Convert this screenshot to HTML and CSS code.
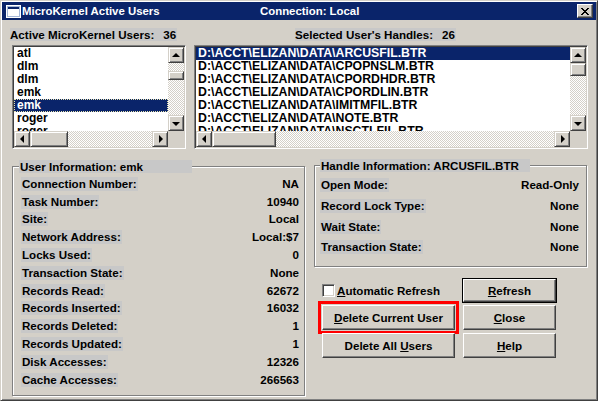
FILE: index.html
```html
<!DOCTYPE html>
<html>
<head>
<meta charset="utf-8">
<title>MicroKernel Active Users</title>
<link rel="stylesheet" href="styles.css">
</head>
<body>
<div class="window">
  <div class="titlebar">
    <svg class="appicon" width="15" height="13" viewBox="0 0 15 13">
      <rect x="0" y="0" width="15" height="13" fill="#ffffff"/>
      <rect x="1" y="1" width="13" height="11" fill="#a6b8d8"/>
      <rect x="2" y="2" width="11" height="2" fill="#0a246a"/>
      <rect x="2" y="4" width="11" height="7" fill="#ffffff"/>
    </svg>
    <span class="title-main">MicroKernel Active Users</span>
    <span class="title-conn">Connection: Local</span>
    <button class="tb-close" type="button" aria-label="Close">
      <svg width="8" height="7" viewBox="0 0 8 7">
        <rect x="0" y="0" width="2" height="1"/><rect x="6" y="0" width="2" height="1"/>
        <rect x="1" y="1" width="2" height="1"/><rect x="5" y="1" width="2" height="1"/>
        <rect x="2" y="2" width="4" height="1"/>
        <rect x="3" y="3" width="2" height="1"/>
        <rect x="2" y="4" width="4" height="1"/>
        <rect x="1" y="5" width="2" height="1"/><rect x="5" y="5" width="2" height="1"/>
        <rect x="0" y="6" width="2" height="1"/><rect x="6" y="6" width="2" height="1"/>
      </svg>
    </button>
  </div>

  <div class="dialog">
    <div class="top">
      <div class="col-users">
        <div class="caption"><span class="lbl">Active MicroKernel Users:<span class="count">36</span></span></div>
        <div class="listbox">
          <ul class="items users">
            <li>atl</li>
            <li>dlm</li>
            <li>dlm</li>
            <li>emk</li>
            <li class="sel focus">emk</li>
            <li>roger</li>
            <li>roger</li>
          </ul>
          <div class="vscroll">
            <div class="sbtn"><span class="arr up"></span></div>
            <div class="track v"><div class="thumb users-v"></div></div>
            <div class="sbtn"><span class="arr down"></span></div>
          </div>
          <div class="hscroll">
            <div class="sbtn"><span class="arr left"></span></div>
            <div class="track h"><div class="thumb users-h"></div></div>
            <div class="sbtn"><span class="arr right"></span></div>
          </div>
          <div class="corner"></div>
        </div>
      </div>

      <div class="col-handles">
        <div class="caption"><span class="lbl">Selected User's Handles:<span class="count">26</span></span></div>
        <div class="listbox">
          <ul class="items files">
            <li class="sel">D:\ACCT\ELIZAN\DATA\ARCUSFIL.BTR</li>
            <li>D:\ACCT\ELIZAN\DATA\CPOPNSLM.BTR</li>
            <li>D:\ACCT\ELIZAN\DATA\CPORDHDR.BTR</li>
            <li>D:\ACCT\ELIZAN\DATA\CPORDLIN.BTR</li>
            <li>D:\ACCT\ELIZAN\DATA\IMITMFIL.BTR</li>
            <li>D:\ACCT\ELIZAN\DATA\NOTE.BTR</li>
            <li>D:\ACCT\ELIZAN\DATA\NSCTLFIL.BTR</li>
          </ul>
          <div class="vscroll">
            <div class="sbtn"><span class="arr up"></span></div>
            <div class="track v"><div class="thumb files-v"></div></div>
            <div class="sbtn"><span class="arr down"></span></div>
          </div>
          <div class="hscroll">
            <div class="sbtn"><span class="arr left"></span></div>
            <div class="track h"><div class="thumb files-h"></div></div>
            <div class="sbtn"><span class="arr right"></span></div>
          </div>
          <div class="corner"></div>
        </div>
      </div>
    </div>

    <div class="bottom">
      <fieldset class="group user-info">
        <legend>User Information: emk</legend>
        <div class="rows">
          <div class="row"><span class="k">Connection Number:</span><span class="v">NA</span></div>
          <div class="row"><span class="k">Task Number:</span><span class="v">10940</span></div>
          <div class="row"><span class="k">Site:</span><span class="v">Local</span></div>
          <div class="row"><span class="k">Network Address:</span><span class="v">Local:$7</span></div>
          <div class="row"><span class="k">Locks Used:</span><span class="v">0</span></div>
          <div class="row"><span class="k">Transaction State:</span><span class="v">None</span></div>
          <div class="row"><span class="k">Records Read:</span><span class="v">62672</span></div>
          <div class="row"><span class="k">Records Inserted:</span><span class="v">16032</span></div>
          <div class="row"><span class="k">Records Deleted:</span><span class="v">1</span></div>
          <div class="row"><span class="k">Records Updated:</span><span class="v">1</span></div>
          <div class="row"><span class="k">Disk Accesses:</span><span class="v">12326</span></div>
          <div class="row"><span class="k">Cache Accesses:</span><span class="v">266563</span></div>
        </div>
      </fieldset>

      <div class="right-col">
        <fieldset class="group handle-info">
          <legend>Handle Information: ARCUSFIL.BTR</legend>
          <div class="rows">
            <div class="row"><span class="k">Open Mode:</span><span class="v">Read-Only</span></div>
            <div class="row"><span class="k">Record Lock Type:</span><span class="v">None</span></div>
            <div class="row"><span class="k">Wait State:</span><span class="v">None</span></div>
            <div class="row"><span class="k">Transaction State:</span><span class="v">None</span></div>
          </div>
        </fieldset>

        <div class="controls">
          <label class="check"><span class="box"></span><span><u>A</u>utomatic Refresh</span></label>
          <button class="btn default" type="button"><u>R</u>efresh</button>
          <button class="btn marked" type="button"><u>D</u>elete Current User</button>
          <button class="btn" type="button"><u>C</u>lose</button>
          <button class="btn" type="button">Delete All <u>U</u>sers</button>
          <button class="btn" type="button"><u>H</u>elp</button>
        </div>
      </div>
    </div>
  </div>
</div>
</body>
</html>
```

FILE: styles.css
```css
* { box-sizing: border-box; }

html, body {
  margin: 0;
  padding: 0;
}

body {
  width: 598px;
  height: 401px;
  overflow: hidden;
  background: #d4d0c8;
  font-family: "Liberation Sans", Arial, sans-serif;
  font-weight: bold;
  font-size: 11.6px;
  color: #000;
}

.window {
  width: 598px;
  height: 401px;
  background: #d4d0c8;
  border: 1px solid;
  border-color: #d4d0c8 #404040 #404040 #d4d0c8;
  box-shadow: inset 1px 1px #ffffff, inset -1px -1px #808080;
  padding: 1px;
}

/* ---------- title bar ---------- */
.titlebar {
  height: 18px;
  background: #0a246a;
  color: #fff;
  display: flex;
  align-items: center;
  padding: 0 2px 0 4px;
  font-size: 11.4px;
}

.appicon { flex: none; display: block; }

.title-main {
  margin-left: 1px;
  width: 238px;
  flex: none;
  white-space: nowrap;
}

.title-conn {
  flex: 1;
  white-space: nowrap;
}

.tb-close {
  flex: none;
  width: 16px;
  height: 14px;
  margin-right: 1px;
  padding: 0;
  display: flex;
  align-items: center;
  justify-content: center;
  background: #d4d0c8;
  border: 1px solid;
  border-color: #ffffff #404040 #404040 #ffffff;
  box-shadow: inset -1px -1px #808080;
}

.tb-close svg { display: block; fill: #000; }

/* ---------- dialog body ---------- */
.dialog {
  padding: 8px 0 0 8px;
}

.top {
  display: flex;
  gap: 8px;
}

.col-users { width: 176px; }
.col-handles { width: 394px; }

.caption {
  height: 13px;
  line-height: 13px;
  display: flex;
  white-space: nowrap;
}

.col-handles .caption { padding-left: 101px; }

.lbl {
  background: #c8c8c8;
  padding: 0 1px 0 0;
}

.count { margin-left: 9px; }

/* ---------- list boxes ---------- */
.listbox {
  margin-top: 4px;
  height: 104px;
  display: grid;
  grid-template-columns: 1fr 16px;
  grid-template-rows: 1fr 16px;
  background: #fff;
  border: 1px solid;
  border-color: #808080 #ffffff #ffffff #808080;
  box-shadow: inset 1px 1px #404040, inset -1px -1px #d4d0c8;
  padding: 1px;
}

.col-users .listbox {
  margin-left: 2px;
  width: 174px;
}

.col-handles .listbox { width: 394px; }

.items {
  list-style: none;
  margin: 0;
  padding: 0;
  overflow: hidden;
  min-width: 0;
}

.items li {
  height: 13px;
  line-height: 13px;
  white-space: nowrap;
  overflow: hidden;
}

.items.users li {
  padding-left: 3px;
  font-size: 12px;
}

.items.files li {
  padding-left: 2px;
  font-size: 12.3px;
}

.items li.sel {
  background: #0a246a;
  color: #fff;
}

.items li.focus {
  outline: 1px dotted #e8e4b0;
  outline-offset: -1px;
}

/* ---------- scrollbars ---------- */
.vscroll {
  display: flex;
  flex-direction: column;
}

.hscroll {
  display: flex;
  min-width: 0;
}

.track {
  flex: 1;
  display: flex;
  background-color: #fff;
  background-image: repeating-conic-gradient(#d4d0c8 0% 25%, #ffffff 0% 50%);
  background-size: 2px 2px;
}

.track.v { flex-direction: column; }

.sbtn, .thumb {
  background: #d4d0c8;
  border: 1px solid;
  border-color: #d4d0c8 #404040 #404040 #d4d0c8;
  box-shadow: inset 1px 1px #ffffff, inset -1px -1px #808080;
}

.sbtn {
  flex: none;
  width: 16px;
  height: 16px;
  display: flex;
  align-items: center;
  justify-content: center;
}

.thumb { flex: none; }

.users-v { height: 9px; margin-top: 8px; }
.files-v { height: 13px; }
.users-h { width: 38px; }
.files-h { width: 64px; }

.corner { background: #d4d0c8; }

.arr {
  display: block;
  width: 0;
  height: 0;
}

.arr.up {
  border-left: 4px solid transparent;
  border-right: 4px solid transparent;
  border-bottom: 4px solid #000;
  margin-top: -1px;
}

.arr.down {
  border-left: 4px solid transparent;
  border-right: 4px solid transparent;
  border-top: 4px solid #000;
  margin-top: 1px;
}

.arr.left {
  border-top: 4px solid transparent;
  border-bottom: 4px solid transparent;
  border-right: 4px solid #000;
  margin-left: -1px;
}

.arr.right {
  border-top: 4px solid transparent;
  border-bottom: 4px solid transparent;
  border-left: 4px solid #000;
  margin-left: 1px;
}

/* ---------- group boxes ---------- */
.bottom {
  display: flex;
  margin-top: 10px;
  padding-left: 2px;
  align-items: flex-start;
}

.group {
  margin: 0;
  padding: 0;
  min-width: 0;
  border: 1px solid #808080;
  box-shadow: inset 1px 1px #ffffff, 1px 1px #ffffff;
}

.group legend {
  margin-left: 6px;
  padding: 0 1px;
  height: 13px;
  line-height: 13px;
  background: #c8c8c8;
  white-space: nowrap;
}

.user-info {
  margin-top: 1px;
  width: 293px;
  height: 236px;
}

.user-info legend { width: 173px; }

.right-col {
  margin-left: 9px;
  width: 273px;
}

.handle-info {
  width: 273px;
  height: 108px;
}

.handle-info legend {
  margin-left: 5px;
  width: 210px;
}

.rows { display: flex; flex-direction: column; }

.user-info .rows { padding: 2px 5px 0 8px; }
.handle-info .rows { padding: 3px 7px 0 5px; }

.row {
  display: flex;
  justify-content: space-between;
  align-items: center;
  white-space: nowrap;
}

.user-info .row { height: 17.8px; }
.handle-info .row { height: 20.7px; }

.row .k {
  background: #c8c8c8;
  padding: 0 1px;
  line-height: 14px;
}

.row .v { line-height: 14px; }

/* ---------- controls ---------- */
.controls {
  margin: 12px 0 0 8px;
  display: grid;
  grid-template-columns: 133px 93px;
  grid-template-rows: 23px 25px 25px;
  column-gap: 8px;
  row-gap: 3px;
}

.check {
  display: flex;
  align-items: center;
  gap: 2px;
  white-space: nowrap;
}

.check .box {
  flex: none;
  width: 13px;
  height: 13px;
  background: #fff;
  border: 1px solid;
  border-color: #808080 #ffffff #ffffff #808080;
  box-shadow: inset 1px 1px #404040, inset -1px -1px #d4d0c8;
}

.btn {
  font: inherit;
  color: #000;
  background: #d4d0c8;
  border: 1px solid;
  border-color: #ffffff #404040 #404040 #ffffff;
  box-shadow: inset -1px -1px #808080;
  padding: 0;
  margin: 0;
  width: 100%;
  height: 100%;
  white-space: nowrap;
}

.btn.default {
  box-shadow: 0 0 0 1px #000, inset -1px -1px #808080;
}

.btn.marked {
  outline: 3px solid #ff0000;
  outline-offset: 1px;
}
```
